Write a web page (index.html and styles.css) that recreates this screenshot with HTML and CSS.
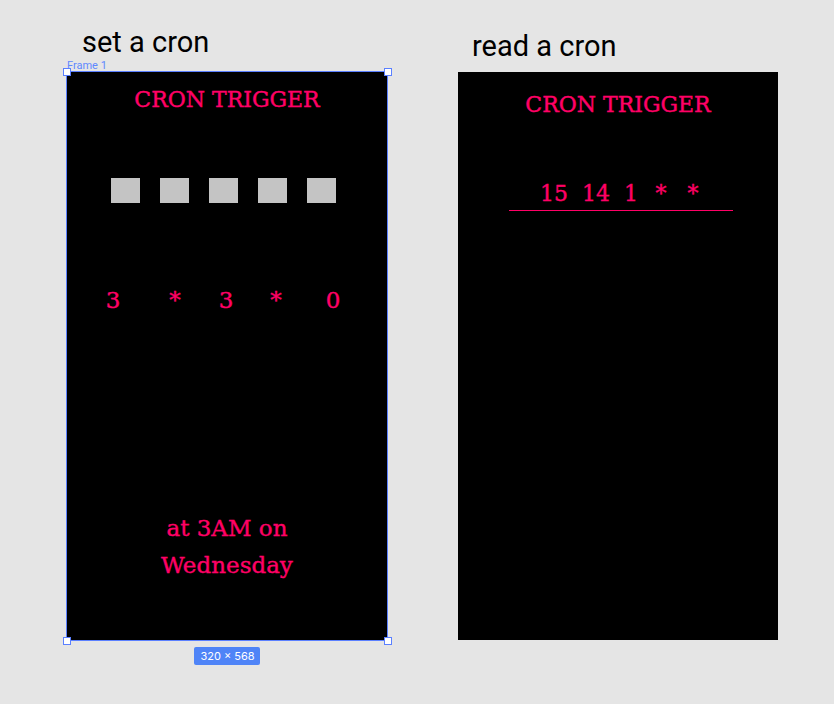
FILE: index.html
```html
<!DOCTYPE html>
<html>
<head>
<meta charset="utf-8">
<link rel="stylesheet" href="styles.css">
</head>
<body>
<div class="canvas">
  <section class="col col-set">
    <h1 class="heading heading-set">set a cron</h1>
    <div class="frame-label">Frame 1</div>
    <div class="frame frame-selected">
      <span class="handle h-tl"></span>
      <span class="handle h-tr"></span>
      <span class="handle h-bl"></span>
      <span class="handle h-br"></span>
      <div class="title title-set">CRON TRIGGER</div>
      <div class="boxes">
        <span class="box"></span>
        <span class="box"></span>
        <span class="box"></span>
        <span class="box"></span>
        <span class="box"></span>
      </div>
      <div class="values">
        <span class="val v1">3</span>
        <span class="val v2">*</span>
        <span class="val v3">3</span>
        <span class="val v4">*</span>
        <span class="val v5">0</span>
      </div>
      <div class="summary">at 3AM on<br>Wednesday</div>
    </div>
    <div class="badge-row"><span class="badge">320 × 568</span></div>
  </section>
  <section class="col col-read">
    <h1 class="heading heading-read">read a cron</h1>
    <div class="frame">
      <div class="title title-read">CRON TRIGGER</div>
      <div class="cron-input">
        <span class="part p2">15</span>
        <span class="part p2">14</span>
        <span class="part p1">1</span>
        <span class="part star">*</span>
        <span class="part star">*</span>
      </div>
    </div>
  </section>
</div>
</body>
</html>
```
FILE: styles.css
```css
html, body {
  margin: 0;
  padding: 0;
  background: #e5e5e5;
  width: 834px;
  height: 704px;
  overflow: hidden;
}

.canvas {
  display: flex;
  gap: 71px;
  padding-left: 67px;
}

.col {
  width: 320px;
  display: flex;
  flex-direction: column;
}

.heading {
  margin: 0;
  font-family: Roboto, "Liberation Sans", sans-serif;
  font-weight: 400;
  font-size: 29px;
  line-height: 34px;
  color: #000;
}

.heading-set {
  margin-top: 25px;
  padding-left: 15px;
}

.heading-read {
  margin-top: 29px;
  margin-bottom: 9px;
  padding-left: 14px;
}

.frame-label {
  font-family: Roboto, "Liberation Sans", sans-serif;
  font-size: 11px;
  line-height: 13px;
  color: #5f88ff;
}

.frame {
  position: relative;
  width: 320px;
  height: 568px;
  background: #000;
  display: flex;
  flex-direction: column;
  align-items: center;
  font-family: "DejaVu Serif", "Liberation Serif", serif;
  color: #ff0066;
  -webkit-text-stroke: 0.4px #ff0066;
}

.frame-selected {
  outline: 1px solid #5b80ff;
}

.handle {
  position: absolute;
  width: 6px;
  height: 6px;
  background: #fff;
  border: 1px solid #5b80ff;
}

.h-tl { left: -4px; top: -4px; }
.h-tr { right: -5px; top: -4px; }
.h-bl { left: -4px; bottom: -5px; }
.h-br { right: -5px; bottom: -5px; }

.title {
  font-size: 22px;
  line-height: 26px;
  white-space: nowrap;
}

.title-set {
  margin-top: 15px;
}

.title-read {
  margin-top: 20px;
}

.boxes {
  align-self: flex-start;
  display: flex;
  gap: 20px;
  margin-top: 65px;
  padding-left: 44px;
}

.box {
  width: 29px;
  height: 25px;
  background: #c4c4c4;
}

.values {
  align-self: flex-start;
  display: flex;
  margin-top: 84px;
  padding-left: 31px;
  font-size: 23px;
  line-height: 27px;
}

.val {
  width: 30px;
  text-align: center;
}

.v2 { margin-left: 32px; }
.v3 { margin-left: 21px; }
.v4 { margin-left: 20px; }
.v5 { margin-left: 27px; }

.summary {
  margin-top: auto;
  margin-bottom: 56px;
  font-size: 23px;
  line-height: 37px;
  text-align: center;
}

.cron-input {
  margin-top: 63px;
  margin-left: 6px;
  width: 224px;
  display: flex;
  justify-content: center;
  gap: 14px;
  padding-bottom: 3px;
  box-sizing: border-box;
  border-bottom: 1px solid #ff0066;
  font-size: 22px;
  line-height: 26px;
}

.part {
  text-align: center;
}

.p2 { width: 28px; }
.p1 { width: 14px; }
.star { width: 18px; }

.badge-row {
  display: flex;
  justify-content: center;
  margin-top: 7px;
}

.badge {
  background: #4f84f7;
  color: #fff;
  font-family: Inter, Roboto, "Liberation Sans", sans-serif;
  font-size: 11px;
  line-height: 18px;
  padding: 0 5px 0 6px;
  border-radius: 2px;
}
```
